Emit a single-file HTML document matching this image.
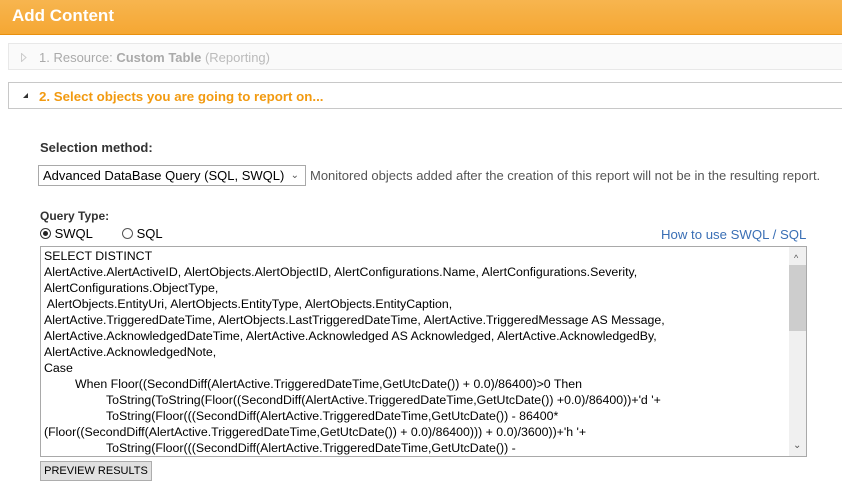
<!DOCTYPE html>
<html><head><style>
body{margin:0;width:842px;height:498px;background:#fff;font-family:"Liberation Sans",Arial,sans-serif;position:relative;overflow:hidden}
.abs{position:absolute;white-space:nowrap}
#hdr{left:0;top:0;width:842px;height:34px;background:linear-gradient(#f7b54f,#f5a733);border-bottom:1px solid #e8900f}
#hdr span{position:absolute;left:12px;top:6px;color:#fff;font-weight:bold;font-size:17px}
.p{left:8px;width:840px;height:27px;box-sizing:border-box}
#p1{top:43px;border:1px solid #e8e8e8;background:#fafafa}
#p2{top:82px;border:1px solid #c8c8c8;background:#fff}
.t{font-size:13px;top:6px;left:30px}
#ta{left:40px;top:246px;width:767px;height:211px;border:1px solid #a9a9a9;box-sizing:border-box;overflow:hidden;font-size:12.35px;line-height:16px;color:#000}
#ta .l{position:absolute;left:3px;white-space:pre}
#sb{position:absolute;right:0;top:0;width:17px;height:209px;background:#f0f0f0}
#btn{left:40px;top:461px;width:112px;height:20px;background:#e1e1e1;border:1px solid #adadad;box-sizing:border-box;font-size:11px;text-align:center;line-height:18px;color:#000}
</style></head><body>
<div id="hdr" class="abs"><span>Add Content</span></div>
<div id="p1" class="abs p"><svg class="abs" style="left:12px;top:9px" width="6" height="9"><path d="M0.5 0.5L5 4.5L0.5 8.5Z" fill="none" stroke="#ccc"/></svg><span class="abs t" style="color:#aaa">1. Resource: <b>Custom Table</b> <span style="color:#bbb">(Reporting)</span></span></div>
<div id="p2" class="abs p"><svg class="abs" style="left:14px;top:10px" width="6" height="6"><path d="M5 0L5 5L0 5Z" fill="#333"/></svg><span class="abs t" style="color:#f29a10;font-weight:bold;font-size:13.3px">2. Select objects you are going to report on...</span></div>
<div class="abs" style="left:40px;top:140px;font-size:13px;font-weight:bold;color:#333">Selection method:</div>
<div class="abs" style="left:38px;top:165px;width:268px;height:21px;border:1px solid #a9a9a9;box-sizing:border-box;font-size:13px;line-height:19px;padding-left:4px">Advanced DataBase Query (SQL, SWQL)<span class="abs" style="right:6px;top:0;font-size:10px;color:#555">&#8964;</span></div>
<div class="abs" style="left:310px;top:168px;font-size:13px;color:#555">Monitored objects added after the creation of this report will not be in the resulting report.</div>
<div class="abs" style="left:40px;top:209px;font-size:12px;font-weight:bold;color:#333">Query Type:</div>
<div class="abs" style="left:40px;top:226px;font-size:13px;color:#000"><span style="display:inline-block;width:11px;height:11px;border:1px solid #333;border-radius:50%;box-sizing:border-box;vertical-align:-1px;position:relative"><span style="position:absolute;left:2px;top:2px;width:5px;height:5px;border-radius:50%;background:#222"></span></span> SWQL</div>
<div class="abs" style="left:122px;top:226px;font-size:13px;color:#000"><span style="display:inline-block;width:11px;height:11px;border:1px solid #555;border-radius:50%;box-sizing:border-box;vertical-align:-1px"></span> SQL</div>
<div class="abs" style="left:661px;top:227px;font-size:13.2px;color:#3a6fb5">How to use SWQL / SQL</div>
<div id="ta" class="abs">
<div class="l" style="top:1px">SELECT DISTINCT</div>
<div class="l" style="top:17px">AlertActive.AlertActiveID, AlertObjects.AlertObjectID, AlertConfigurations.Name, AlertConfigurations.Severity,</div>
<div class="l" style="top:33px">AlertConfigurations.ObjectType,</div>
<div class="l" style="top:49px"> AlertObjects.EntityUri, AlertObjects.EntityType, AlertObjects.EntityCaption,</div>
<div class="l" style="top:65px">AlertActive.TriggeredDateTime, AlertObjects.LastTriggeredDateTime, AlertActive.TriggeredMessage AS Message,</div>
<div class="l" style="top:81px">AlertActive.AcknowledgedDateTime, AlertActive.Acknowledged AS Acknowledged, AlertActive.AcknowledgedBy,</div>
<div class="l" style="top:97px">AlertActive.AcknowledgedNote,</div>
<div class="l" style="top:113px">Case</div>
<div class="l" style="top:129px;left:34px">When Floor((SecondDiff(AlertActive.TriggeredDateTime,GetUtcDate()) + 0.0)/86400)&gt;0 Then</div>
<div class="l" style="top:145px;left:65px">ToString(ToString(Floor((SecondDiff(AlertActive.TriggeredDateTime,GetUtcDate()) +0.0)/86400))+'d '+</div>
<div class="l" style="top:161px;left:65px">ToString(Floor(((SecondDiff(AlertActive.TriggeredDateTime,GetUtcDate()) - 86400*</div>
<div class="l" style="top:177px">(Floor((SecondDiff(AlertActive.TriggeredDateTime,GetUtcDate()) + 0.0)/86400))) + 0.0)/3600))+'h '+</div>
<div class="l" style="top:193px;left:65px">ToString(Floor(((SecondDiff(AlertActive.TriggeredDateTime,GetUtcDate()) -</div>
<div id="sb"><div style="position:absolute;left:0;top:18px;width:17px;height:66px;background:#cdcdcd"></div>
<div style="position:absolute;left:5px;top:3px;font-size:9px;color:#555">&#94;</div>
<div style="position:absolute;left:4px;bottom:2px;font-size:10px;color:#555">&#8964;</div></div>
</div>
<div id="btn" class="abs">PREVIEW RESULTS</div>
</body></html>
